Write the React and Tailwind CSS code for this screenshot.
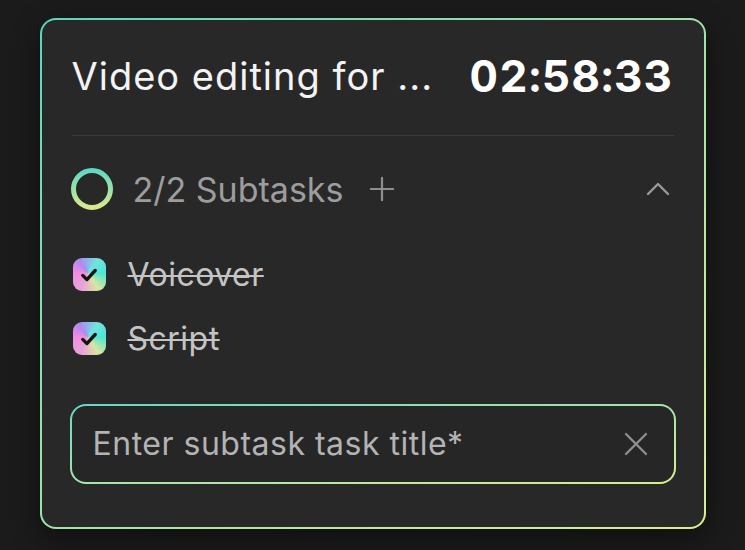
import React, { useState } from "react";

const subtasks = [
  { id: 1, title: "Voicover", done: true },
  { id: 2, title: "Script", done: true },
];

function ProgressRing() {
  return (
    <svg width="44" height="44" viewBox="0 0 44 44">
      <defs>
        <linearGradient id="ring" x1="0" y1="0" x2="0" y2="1">
          <stop offset="0%" stopColor="#5fd9c4" />
          <stop offset="100%" stopColor="#d8ea8c" />
        </linearGradient>
      </defs>
      <circle cx="22" cy="22" r="18.5" fill="none" stroke="url(#ring)" strokeWidth="5" />
    </svg>
  );
}

function CheckBox() {
  return (
    <div className="w-[33px] h-[33px] rounded-[9px] flex items-center justify-center bg-[conic-gradient(from_200deg_at_45%_45%,#e9a3d8,#f38be0_20%,#a98cf0_35%,#6fe3de_55%,#4fe6d2_70%,#d6e7a0_85%,#e9a3d8)]">
      <svg width="20" height="20" viewBox="0 0 24 24" fill="none" stroke="#141414" strokeWidth="4" strokeLinecap="round" strokeLinejoin="round">
        <path d="M4.5 12.5l5 5L19.5 6.5" />
      </svg>
    </div>
  );
}

export default function App() {
  const [value, setValue] = useState("");

  return (
    <div className="min-h-screen w-full bg-[#1b1b1b] flex justify-center pt-[18px] font-['Inter',sans-serif]">
      {/* Card with gradient border */}
      <div className="w-[666px] h-[511px] rounded-[16px] p-[2px] bg-linear-to-br from-[#57d6bd] to-[#d8ef8c] shadow-[0_10px_30px_rgba(0,0,0,0.45)]">
        <div className="h-full w-full rounded-[14px] bg-[#282828] px-[28px] pt-[26px]">
          {/* Header */}
          <div className="flex items-center justify-between h-[60px] px-[2px]">
            <h1 className="text-[38px] text-[#f3f3f3] tracking-[1px] font-normal whitespace-nowrap">Video editing for ...</h1>
            <span className="text-[44px] font-bold text-white tracking-[1.2px] tabular-nums">02:58:33</span>
          </div>
          <div className="h-px bg-[#3a3a3a] mt-[29px] mx-[2px]" />

          {/* Subtasks header */}
          <div className="flex items-center h-[44px] mt-[31px]">
            <ProgressRing />
            <span className="ml-[19px] text-[34px] text-[#9d9d9d]">2/2 Subtasks</span>
            <svg className="ml-[26px]" width="26" height="26" viewBox="0 0 28 28" stroke="#8e8e8e" strokeWidth="2.4" strokeLinecap="round">
              <path d="M14 2v24M2 14h24" />
            </svg>
            <svg className="ml-auto mr-[6px]" width="24" height="14" viewBox="0 0 24 14" fill="none" stroke="#9a9a9a" strokeWidth="2.4" strokeLinecap="round" strokeLinejoin="round">
              <path d="M2 12L12 2l10 10" />
            </svg>
          </div>

          {/* Subtask list */}
          <div className="flex flex-col gap-[31px] mt-[47px] pl-[3px]">
            {subtasks.map((t) => (
              <div key={t.id} className="flex items-center h-[33px]">
                <CheckBox />
                <span className="ml-[22px] text-[32px] text-[#c4c4c4] line-through decoration-[2px] tracking-[0.5px]">{t.title}</span>
              </div>
            ))}
          </div>

          {/* Input */}
          <div className="mt-[49px] rounded-[16px] p-[2px] bg-linear-to-br from-[#5fd9c4] to-[#d8ef8c]">
            <div className="flex items-center h-[76px] rounded-[14px] bg-[#262626] pl-[21px] pr-[26px]">
              <input
                value={value}
                onChange={(e) => setValue(e.target.value)}
                placeholder="Enter subtask task title*"
                className="flex-1 min-w-0 bg-transparent outline-none text-[32px] text-white placeholder:text-[#b3b3b3] tracking-[0.5px]"
              />
              <svg width="24" height="24" viewBox="0 0 24 24" stroke="#8f8f8f" strokeWidth="2.4" strokeLinecap="round">
                <path d="M2 2l20 20M22 2L2 22" />
              </svg>
            </div>
          </div>
        </div>
      </div>
    </div>
  );
}
